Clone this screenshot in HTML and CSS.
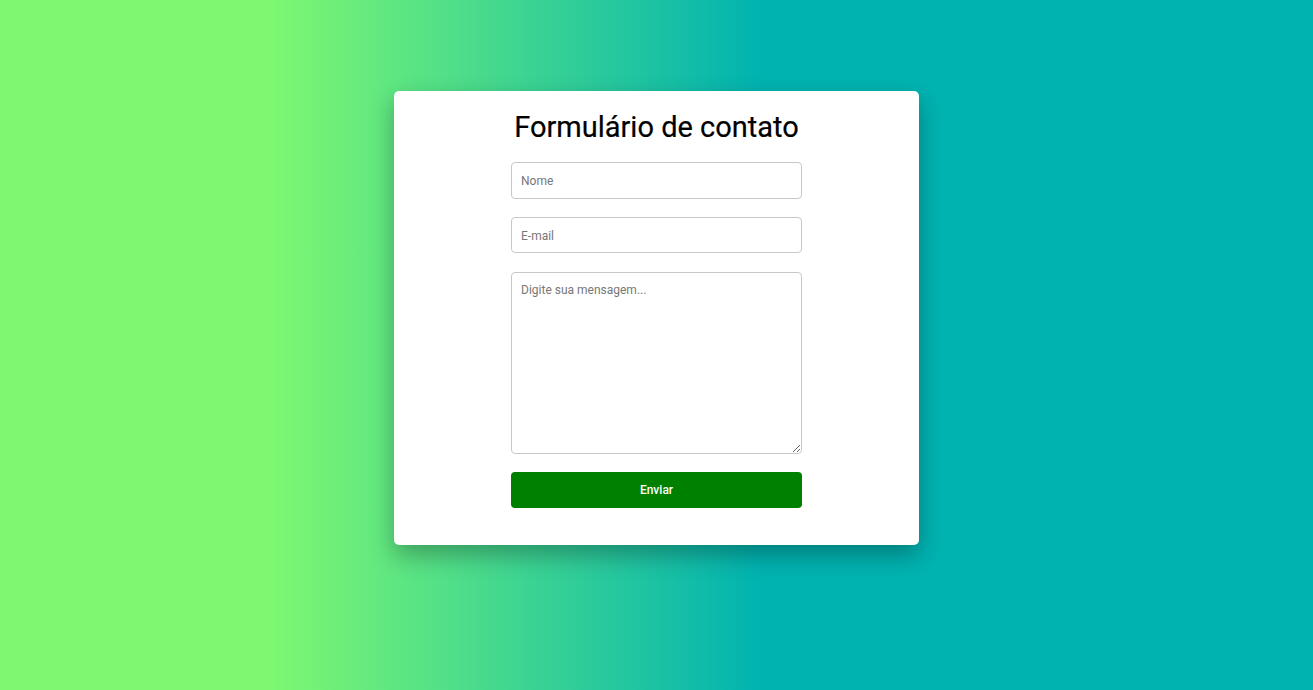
FILE: index.html
```html
<!DOCTYPE html>
<html lang="pt-BR">
<head>
<meta charset="utf-8">
<title>Formulário de contato</title>
<link rel="stylesheet" href="styles.css">
</head>
<body>
<main class="page">
  <section class="card">
    <h1 class="title">Formulário de contato</h1>
    <form class="form">
      <input class="field" type="text" placeholder="Nome">
      <input class="field" type="email" placeholder="E-mail">
      <textarea class="field area" placeholder="Digite sua mensagem..."></textarea>
      <button class="submit" type="button">Enviar</button>
    </form>
  </section>
</main>
</body>
</html>
```
FILE: styles.css
```css
* { box-sizing: border-box; }
html, body { margin: 0; height: 100%; }
body {
  font-family: Roboto, "Liberation Sans", Arial, sans-serif;
  background: linear-gradient(to right, #7ff871 20.5%, #00b3b1 58%);
}
.page {
  height: 100%;
  display: flex;
  justify-content: center;
  align-items: flex-start;
  padding-top: 91px;
}
.card {
  width: 525px;
  background: #fff;
  border-radius: 5px;
  box-shadow: 0 10px 25px rgba(0, 0, 0, 0.3);
  padding: 19px 0 36.5px;
  display: flex;
  flex-direction: column;
  align-items: center;
}
.title {
  margin: 0 0 18px;
  font-size: 29px;
  font-weight: 400;
  line-height: 34px;
  color: #000;
  -webkit-text-stroke: 0.2px #000;
}
.form {
  width: 291px;
  display: flex;
  flex-direction: column;
  gap: 18.3px;
}
.field {
  width: 100%;
  height: 36.5px;
  border: 1px solid #c8c8c8;
  border-radius: 4px;
  padding: 1px 9px 0;
  font-family: Roboto, "Liberation Sans", Arial, sans-serif;
  font-size: 12px;
  color: #333;
  background: #fff;
}
.field::placeholder { color: #777; }
.area {
  height: 182px;
  padding: 10px 9px;
  resize: vertical;
}
.submit {
  height: 36.5px;
  border: none;
  border-radius: 4px;
  background: #008000;
  color: #fff;
  font-family: Roboto, "Liberation Sans", Arial, sans-serif;
  font-size: 12px;
  font-weight: 500;
  cursor: pointer;
}
```
